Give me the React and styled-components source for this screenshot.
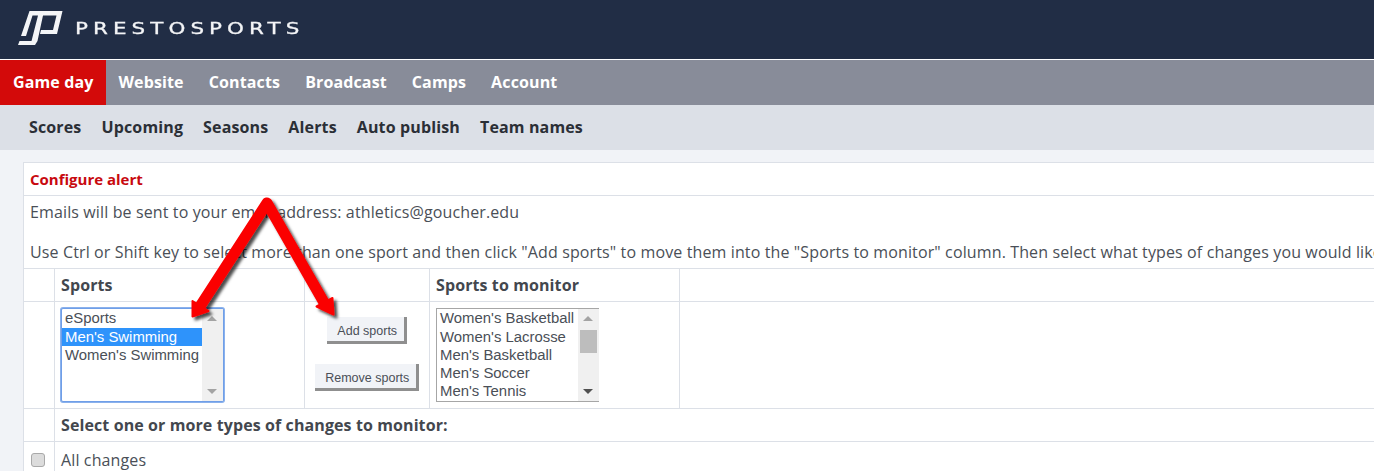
import React from 'react';
import styled, { createGlobalStyle } from 'styled-components';

const GlobalStyle = createGlobalStyle`
  html, body {
    margin: 0;
    height: 100%;
    overflow: hidden;
    background: #f1f3f7;
    font-family: "Open Sans", "Liberation Sans", sans-serif;
    color: #4a4f57;
  }
`;

const Page = styled.div`
  position: relative;
  width: 1374px;
  height: 471px;
  overflow: hidden;
`;

const Header = styled.header`
  height: 59px;
  background: #212d45;
  display: flex;
  align-items: center;
  padding-left: 17px;
  gap: 11px;
  border-bottom: 1px solid #fff;

  svg {
    margin-top: -3px;
  }
`;

const BrandName = styled.span`
  font-family: "DejaVu Sans", sans-serif;
  font-size: 16.5px;
  letter-spacing: 3.9px;
  color: #f4f5f7;
  margin-top: -2px;
  transform: scaleX(1.3);
  transform-origin: left center;
  -webkit-text-stroke: 0.3px #f4f5f7;
`;

const MainNav = styled.nav`
  height: 45px;
  background: #888c99;
  display: flex;
`;

const MainLink = styled.a`
  display: flex;
  align-items: center;
  padding: 0 12.5px 2px ${(p) => (p.$active ? '13px' : '12.5px')};
  font-size: 16px;
  font-weight: 700;
  letter-spacing: 0.13px;
  color: #fff;
  background: ${(p) => (p.$active ? '#d30a0a' : 'transparent')};
`;

const SubNav = styled.nav`
  height: 45px;
  background: #dce0e7;
  display: flex;
  align-items: center;
  padding: 0 0 2px 19px;
  box-sizing: border-box;
`;

const SubLink = styled.a`
  padding: 0 10px;
  font-size: 16px;
  font-weight: 700;
  letter-spacing: 0.14px;
  color: #2b2f36;
`;

const Panel = styled.section`
  margin: 12px 0 0 23px;
  width: 1700px;
  background: #fff;
  border: 1px solid #dce0e7;
  border-right: 0;
`;

const PanelTitle = styled.div`
  height: 32px;
  padding-left: 6px;
  display: flex;
  align-items: center;
  font-size: 15px;
  font-weight: 700;
  color: #c8090f;
  border-bottom: 1px solid #dce0e7;
`;

const Intro = styled.div`
  height: 73px;
  padding: 6px 0 0 6px;
  box-sizing: border-box;
  font-size: 16px;
  letter-spacing: 0.125px;
  line-height: 20px;
  white-space: nowrap;
  border-bottom: 1px solid #dce0e7;

  p {
    margin: 0 0 20px;
    height: 20px;
  }
`;

const Grid = styled.div`
  display: grid;
  grid-template-columns: 31px 250px 125px 250px 1fr;
`;

const Cell = styled.div`
  box-sizing: border-box;
  min-height: ${(p) => p.$height || 33}px;
  padding: ${(p) => (p.$flush ? '0' : '0 6px')};
  border-right: 1px solid #dce0e7;
  border-bottom: 1px solid #dce0e7;
  grid-column: ${(p) => p.$span || 'auto'};
  display: flex;
  align-items: center;
`;

const HeadCell = styled(Cell)`
  font-size: 16px;
  font-weight: 700;
  letter-spacing: 0.1px;
  color: #43474e;
`;

const LabelCell = styled(Cell)`
  font-size: 16px;
  letter-spacing: 0.125px;
`;

const ListCell = styled(Cell)`
  align-items: flex-start;
  padding-top: 6px;
`;

const ButtonCell = styled(Cell)`
  flex-direction: column;
  justify-content: flex-start;
  gap: 20px;
  padding-top: 15px;
`;

const ListBox = styled.div`
  box-sizing: border-box;
  width: ${(p) => p.$width}px;
  height: ${(p) => p.$height}px;
  background: #fff;
  border: ${(p) => (p.$focused ? '1px solid #6f9ee8' : '1px solid #a6a6a6')};
  border-right-width: ${(p) => (p.$focused ? '1px' : '0')};
  border-radius: ${(p) => (p.$focused ? '2px' : '0')};
  box-shadow: ${(p) => (p.$focused ? '0 0 0 1px #8ab1ec' : 'none')};
  display: flex;
  font-family: "Liberation Sans", Arial, sans-serif;
  font-size: 14.9px;
  color: #4a4f57;
  overflow: hidden;
`;

const Options = styled.div`
  flex: 1;
  min-width: 0;
  overflow: hidden;
`;

const Option = styled.div`
  height: 18px;
  line-height: 18px;
  padding-left: 3px;
  white-space: nowrap;
  background: ${(p) => (p.$selected ? '#2e93fb' : 'transparent')};
  color: ${(p) => (p.$selected ? '#fff' : '#4a4f57')};

  &:first-child {
    height: 19px;
  }
`;

const Scrollbar = styled.div`
  position: relative;
  width: 21px;
  flex: none;
  background: #f0f0f0;
`;

const ScrollArrow = styled.span`
  position: absolute;
  left: 5px;
  ${(p) => (p.$down ? 'bottom: 7px;' : 'top: 7px;')}
  width: 0;
  height: 0;
  border-left: 5px solid transparent;
  border-right: 5px solid transparent;
  ${(p) => (p.$down ? 'border-top' : 'border-bottom')}: 5px solid ${(p) => p.$color || '#a3a3a3'};
`;

const ScrollThumb = styled.span`
  position: absolute;
  top: 21px;
  left: 2px;
  width: 17px;
  height: 23px;
  background: #bdbdbd;
`;

const ActionButton = styled.button`
  box-sizing: border-box;
  height: 27px;
  padding: 3px 6.5px 0 10px;
  background: #f1f3f7;
  border: 0;
  border-right: 3px solid #8f8f8f;
  border-bottom: 3px solid #8f8f8f;
  font-family: "Liberation Sans", Arial, sans-serif;
  font-size: 12.5px;
  color: #4a4f57;
`;

const Check = styled.span`
  box-sizing: border-box;
  display: block;
  width: 14px;
  height: 14px;
  margin-left: 7px;
  border: 1px solid #a9a9a9;
  border-radius: 3px;
  background: #dcdcdc;
`;

const ArrowLayer = styled.svg`
  position: absolute;
  top: 0;
  left: 0;
  pointer-events: none;
`;

const Logo = () => (
  <svg width="47" height="38" viewBox="17 9 47 38" fill="#f4f5f7">
    <path d="M29.5 11H62.5L57 34H40L41 30H53L56.5 15.5H43L37.5 41L35 45H18L19.5 41H31.5L38 15.5H32.5L26 36H21Z" />
  </svg>
);

const Arrows = () => (
  <ArrowLayer width="1374" height="471" viewBox="0 0 1374 471">
    <defs>
      <filter id="arrowShadow" x="-20%" y="-20%" width="150%" height="150%">
        <feDropShadow dx="3" dy="3" stdDeviation="1.6" floodColor="#000" floodOpacity="0.7" />
      </filter>
    </defs>
    <g filter="url(#arrowShadow)" fill="none" stroke="#fb0000" strokeLinejoin="round">
      <path d="M199 308L267 203L326 306" strokeWidth="11" />
      <path d="M192.5 316.5L192.5 301L208.5 311Z" fill="#fb0000" strokeWidth="2" />
      <path d="M333.5 314.5L316.5 306.5L332.5 298Z" fill="#fb0000" strokeWidth="2" />
    </g>
  </ArrowLayer>
);

const App = () => (
  <Page>
    <GlobalStyle />
    <Header>
      <Logo />
      <BrandName>PRESTOSPORTS</BrandName>
    </Header>
    <MainNav>
      <MainLink $active>Game day</MainLink>
      {['Website', 'Contacts', 'Broadcast', 'Camps', 'Account'].map((name) => (
        <MainLink key={name}>{name}</MainLink>
      ))}
    </MainNav>
    <SubNav>
      {['Scores', 'Upcoming', 'Seasons', 'Alerts', 'Auto publish', 'Team names'].map((name) => (
        <SubLink key={name}>{name}</SubLink>
      ))}
    </SubNav>
    <Panel>
      <PanelTitle>Configure alert</PanelTitle>
      <Intro>
        <p>Emails will be sent to your email address: athletics@goucher.edu</p>
        <p>
          Use Ctrl or Shift key to select more than one sport and then click "Add sports" to move them into the
          "Sports to monitor" column. Then select what types of changes you would like to monitor.
        </p>
      </Intro>
      <Grid>
        <Cell />
        <HeadCell>Sports</HeadCell>
        <Cell />
        <HeadCell>Sports to monitor</HeadCell>
        <Cell />

        <Cell $height={107} />
        <ListCell $height={107}>
          <ListBox $focused $width={163} $height={94}>
            <Options>
              <Option>eSports</Option>
              <Option $selected>Men's Swimming</Option>
              <Option>Women's Swimming</Option>
            </Options>
            <Scrollbar>
              <ScrollArrow />
              <ScrollArrow $down />
            </Scrollbar>
          </ListBox>
        </ListCell>
        <ButtonCell $height={107}>
          <ActionButton>Add sports</ActionButton>
          <ActionButton>Remove sports</ActionButton>
        </ButtonCell>
        <ListCell $height={107}>
          <ListBox $width={163} $height={94}>
            <Options>
              <Option>Women's Basketball</Option>
              <Option>Women's Lacrosse</Option>
              <Option>Men's Basketball</Option>
              <Option>Men's Soccer</Option>
              <Option>Men's Tennis</Option>
            </Options>
            <Scrollbar>
              <ScrollArrow />
              <ScrollThumb />
              <ScrollArrow $down $color="#505050" />
            </Scrollbar>
          </ListBox>
        </ListCell>
        <Cell $height={107} />

        <Cell />
        <HeadCell $span="2 / -1">Select one or more types of changes to monitor:</HeadCell>

        <Cell $flush $height={36}>
          <Check />
        </Cell>
        <LabelCell $span="2 / -1" $height={36}>
          All changes
        </LabelCell>
      </Grid>
    </Panel>
    <Arrows />
  </Page>
);

export default App;
